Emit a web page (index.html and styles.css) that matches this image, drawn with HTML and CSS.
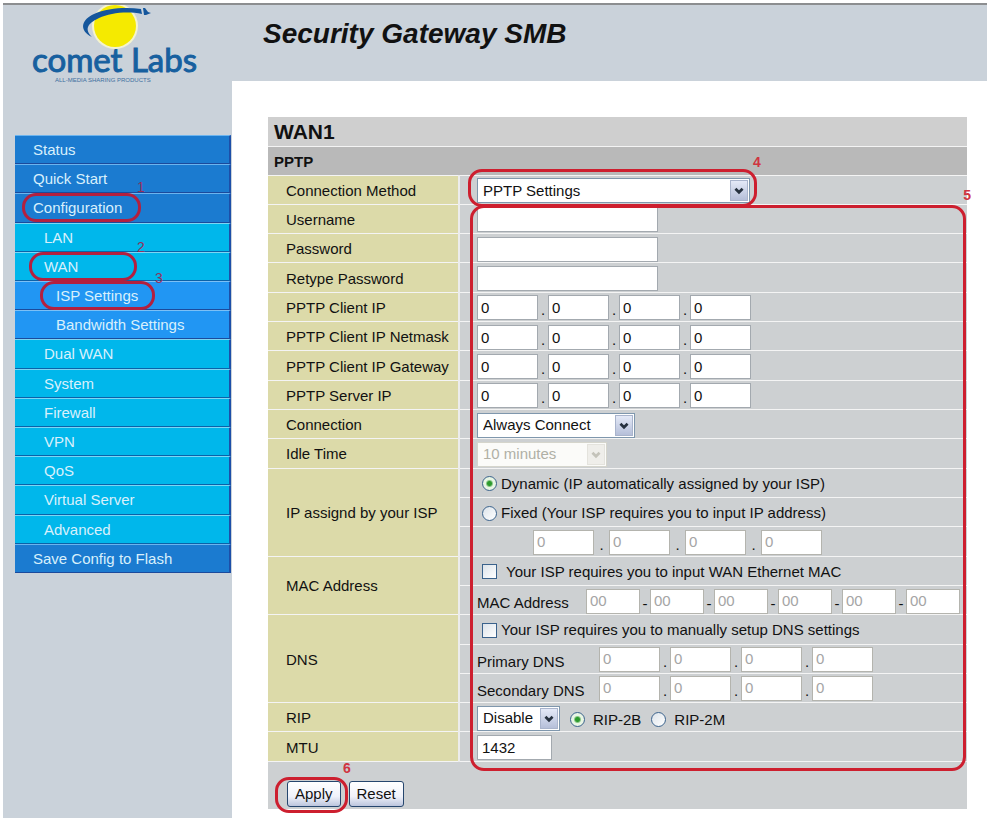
FILE: index.html
```html
<!DOCTYPE html>
<html lang="en">
<head>
<meta charset="utf-8">
<title>Security Gateway SMB</title>
<link rel="stylesheet" href="styles.css">
</head>
<body>
<div class="page">
  <aside class="sidebar">
    <svg class="logo" viewBox="0 0 180 80" role="img" aria-label="comet Labs">
      <circle cx="87" cy="21" r="23" fill="#f4f3cf"/>
      <circle cx="87" cy="21" r="21" fill="#f5ea00"/>
      <path d="M64 32C50 25 54 14 66 9C79 3 98 2 113 4L114 9C99 6 82 8 71 13C58 19 57 25 64 32Z" fill="#14569c"/>
      <path d="M115 3L117 3L120 7L123 8L118 10L116 10Z" fill="#14569c"/>
      <text class="logo-name" x="4" y="67">comet Labs</text>
      <text class="logo-tag" x="27" y="77">ALL-MEDIA SHARING PRODUCTS</text>
    </svg>
    <nav class="menu">
      <a href="#">Status</a>
      <a href="#">Quick Start</a>
      <a href="#">Configuration<span class="mark mark-config"></span><b class="num num-1">1</b></a>
      <a class="sub" href="#">LAN</a>
      <a class="sub" href="#">WAN<span class="mark mark-wan"></span><b class="num num-2">2</b></a>
      <a class="leaf" href="#">ISP Settings<span class="mark mark-isp"></span><b class="num num-3">3</b></a>
      <a class="leaf" href="#">Bandwidth Settings</a>
      <a class="sub" href="#">Dual WAN</a>
      <a class="sub" href="#">System</a>
      <a class="sub" href="#">Firewall</a>
      <a class="sub" href="#">VPN</a>
      <a class="sub" href="#">QoS</a>
      <a class="sub" href="#">Virtual Server</a>
      <a class="sub" href="#">Advanced</a>
      <a href="#">Save Config to Flash</a>
    </nav>
  </aside>
  <header class="header"><h1>Security Gateway SMB</h1></header>
  <main class="main">
    <form class="panel">
      <table class="settings">
        <colgroup><col class="col-label"><col></colgroup>
        <thead>
          <tr><th class="title" colspan="2">WAN1</th></tr>
          <tr><th class="section" colspan="2">PPTP</th></tr>
        </thead>
        <tbody>
          <tr>
            <th><label for="method">Connection Method</label></th>
            <td><span class="select w-method"><select id="method"><option>PPTP Settings</option></select><svg viewBox="0 0 18 20"><path d="M5 8l4 4 4-4"/></svg></span></td>
          </tr>
          <tr><th><label for="user">Username</label></th><td><input id="user" class="text" type="text"></td></tr>
          <tr><th><label for="pass">Password</label></th><td><input id="pass" class="text" type="password"></td></tr>
          <tr><th><label for="pass2">Retype Password</label></th><td><input id="pass2" class="text" type="password"></td></tr>
          <tr>
            <th><label for="cip">PPTP Client IP</label></th>
            <td><div class="ip"><input id="cip" value="0"><i>.</i><input aria-label="Client IP 2" value="0"><i>.</i><input aria-label="Client IP 3" value="0"><i>.</i><input aria-label="Client IP 4" value="0"></div></td>
          </tr>
          <tr>
            <th><label for="cmask">PPTP Client IP Netmask</label></th>
            <td><div class="ip"><input id="cmask" value="0"><i>.</i><input aria-label="Netmask 2" value="0"><i>.</i><input aria-label="Netmask 3" value="0"><i>.</i><input aria-label="Netmask 4" value="0"></div></td>
          </tr>
          <tr>
            <th><label for="cgw">PPTP Client IP Gateway</label></th>
            <td><div class="ip"><input id="cgw" value="0"><i>.</i><input aria-label="Gateway 2" value="0"><i>.</i><input aria-label="Gateway 3" value="0"><i>.</i><input aria-label="Gateway 4" value="0"></div></td>
          </tr>
          <tr>
            <th><label for="sip">PPTP Server IP</label></th>
            <td><div class="ip"><input id="sip" value="0"><i>.</i><input aria-label="Server IP 2" value="0"><i>.</i><input aria-label="Server IP 3" value="0"><i>.</i><input aria-label="Server IP 4" value="0"></div></td>
          </tr>
          <tr>
            <th><label for="conn">Connection</label></th>
            <td><span class="select w-conn"><select id="conn"><option>Always Connect</option></select><svg viewBox="0 0 18 20"><path d="M5 8l4 4 4-4"/></svg></span></td>
          </tr>
          <tr>
            <th><label for="idle">Idle Time</label></th>
            <td><span class="select w-idle"><select id="idle" disabled><option>10 minutes</option></select><svg viewBox="0 0 18 20"><path d="M5 8l4 4 4-4"/></svg></span></td>
          </tr>
          <tr>
            <th rowspan="3">IP assignd by your ISP</th>
            <td><label class="choice"><input type="radio" name="assign" checked>Dynamic (IP automatically assigned by your ISP)</label></td>
          </tr>
          <tr><td><label class="choice"><input type="radio" name="assign">Fixed (Your ISP requires you to input IP address)</label></td></tr>
          <tr><td><div class="ip ip-fixed"><input aria-label="Fixed IP 1" value="0" disabled><i>.</i><input aria-label="Fixed IP 2" value="0" disabled><i>.</i><input aria-label="Fixed IP 3" value="0" disabled><i>.</i><input aria-label="Fixed IP 4" value="0" disabled></div></td></tr>
          <tr>
            <th rowspan="2">MAC Address</th>
            <td><label class="choice choice-wide"><input type="checkbox">Your ISP requires you to input WAN Ethernet MAC</label></td>
          </tr>
          <tr><td><div class="ip mac"><label for="mac">MAC Address</label><input id="mac" value="00" disabled><i>-</i><input aria-label="MAC 2" value="00" disabled><i>-</i><input aria-label="MAC 3" value="00" disabled><i>-</i><input aria-label="MAC 4" value="00" disabled><i>-</i><input aria-label="MAC 5" value="00" disabled><i>-</i><input aria-label="MAC 6" value="00" disabled></div></td></tr>
          <tr>
            <th rowspan="3">DNS</th>
            <td><label class="choice"><input type="checkbox">Your ISP requires you to manually setup DNS settings</label></td>
          </tr>
          <tr><td><div class="ip dns"><label for="dns1">Primary DNS</label><input id="dns1" value="0" disabled><i>.</i><input aria-label="Primary DNS 2" value="0" disabled><i>.</i><input aria-label="Primary DNS 3" value="0" disabled><i>.</i><input aria-label="Primary DNS 4" value="0" disabled></div></td></tr>
          <tr><td><div class="ip dns"><label for="dns2">Secondary DNS</label><input id="dns2" value="0" disabled><i>.</i><input aria-label="Secondary DNS 2" value="0" disabled><i>.</i><input aria-label="Secondary DNS 3" value="0" disabled><i>.</i><input aria-label="Secondary DNS 4" value="0" disabled></div></td></tr>
          <tr>
            <th><label for="rip">RIP</label></th>
            <td><div class="rip"><span class="select w-rip"><select id="rip"><option>Disable</option></select><svg viewBox="0 0 18 20"><path d="M5 8l4 4 4-4"/></svg></span><label><input type="radio" name="ripv" checked>RIP-2B</label><label><input type="radio" name="ripv">RIP-2M</label></div></td>
          </tr>
          <tr><th><label for="mtu">MTU</label></th><td><input id="mtu" class="text mtu" type="text" value="1432"></td></tr>
        </tbody>
      </table>
      <div class="actions">
        <span class="apply"><button type="button">Apply</button><span class="mark mark-apply"></span><b class="num num-6">6</b></span>
        <button type="button">Reset</button>
      </div>
      <span class="mark mark-method"></span><b class="num num-4">4</b>
      <span class="mark mark-fields"></span><b class="num num-5">5</b>
    </form>
  </main>
</div>
</body>
</html>
```
FILE: styles.css
```css
* { box-sizing: border-box; }

body {
  margin: 0;
  padding: 3px 0 0 3px;
  background: #fff;
  color: #111;
  font: 15px/20px "Liberation Sans", Arial, sans-serif;
}

.page {
  display: grid;
  grid-template-columns: 229px 1fr;
  grid-template-rows: 76px 1fr;
  min-height: calc(100vh - 3px);
  background: #cad2da;
  border-top: 2px solid #8c8e90;
}

.sidebar { grid-row: 1 / 3; }

.logo {
  display: block;
  width: 180px;
  height: 80px;
  margin: 0 0 50px 25px;
}
.logo-name { font: 400 33px Lato, sans-serif; fill: #17609f; stroke: #17609f; }
.logo-tag { font: 6px "Liberation Sans", sans-serif; fill: #3d6fa0; }

.menu {
  display: grid;
  grid-auto-rows: 1fr;
  min-height: 438px;
  margin: 0 1px 0 12px;
}
.menu a {
  position: relative;
  display: flex;
  align-items: center;
  padding: 1px 0 0 18px;
  background: #1b7bd0;
  border-top: 1px solid #6cb4ee;
  border-bottom: 1px solid #1b4a9c;
  border-right: 2px solid #1d4fa8;
  color: #d8f0fc;
  text-decoration: none;
}
.menu .sub { padding-left: 29px; background: #00b7eb; border-top-color: #7cd6f4; border-bottom-color: #0b62a8; }
.menu .leaf { padding-left: 41px; background: #2196f3; border-top-color: #7cc0f6; }

.header { padding: 9px 31px; }
.header h1 { margin: 0; font-size: 28px; font-style: italic; line-height: 40px; }

.main { padding: 36px 20px 10px 36px; background: #fff; }
.panel { position: relative; background: #cdd0d2; }

.settings { width: 100%; height: 645px; border-collapse: collapse; table-layout: fixed; }
.col-label { width: 191px; }
.settings th, .settings td { height: 29px; padding: 2px 0 0; border-bottom: 1px solid #f4f4f4; text-align: left; }
.settings tbody th {
  padding-left: 18px;
  background: #dcdaa9;
  border-right: 2px solid #ececec;
  font-weight: 400;
}
.settings td { padding-left: 17px; }
.settings .title { padding-left: 6px; background: #cfcfcf; font-size: 21px; }
.settings .section { padding-left: 6px; background: #b9b9b9; }

input, select, button { margin: 0; font: inherit; color: #111; }
.text, .ip input {
  display: block;
  width: 181px;
  height: 25px;
  padding: 0 3px;
  background: #fff;
  border: 1px solid #a3a9af;
  border-radius: 0;
}
.text.mtu { width: 75px; padding: 0 4px; }
.ip { display: flex; align-items: center; }
.ip > * { flex: none; }
.ip input { width: 61px; }
.ip i { width: 10px; padding-top: 5px; font-style: normal; text-align: center; }
.ip input:disabled { padding-bottom: 2px; color: #a5a5a5; border-color: #b4b4ae; }
.ip-fixed { padding-left: 56px; }
.ip-fixed i { width: 15px; }
.ip label { padding-top: 4px; }
.mac input { width: 54px; }
.mac label { width: 109px; }
.dns label { width: 122px; }

.select { position: relative; display: block; height: 25px; }
.select select {
  width: 100%;
  height: 25px;
  padding: 0 22px 0 5px;
  background: #fff;
  border: 1px solid #7f97ad;
  border-radius: 0;
  appearance: none;
}
.select svg {
  position: absolute;
  top: 2px;
  right: 2px;
  width: 18px;
  height: 21px;
  background: linear-gradient(#e4e9f7, #b5bfd9);
  border: 1px solid #a9b4cc;
  pointer-events: none;
}
.select path { fill: none; stroke: #26313f; stroke-width: 3; }
.select select:disabled { color: #b0b0a6; border-color: #d5d5cc; opacity: 1; background: #fbfbf9; }
.select select:disabled + svg { background: #efeeea; border-color: #e4e3dd; }
.select select:disabled + svg path { stroke: #c4c3ba; }
.w-method { width: 273px; }
.w-conn { width: 158px; }
.w-idle { width: 130px; }
.w-rip { width: 83px; }

input[type="radio"], input[type="checkbox"] {
  flex: none;
  width: 15px;
  height: 15px;
  border: 1px solid #3a628c;
  background: linear-gradient(135deg, #dce3ea, #fff);
  appearance: none;
}
input[type="radio"] { border-radius: 50%; }
input[type="radio"]:checked { background: radial-gradient(circle, #2c9a2c 0 2px, #e8f5e4 4px); }
.choice { display: flex; align-items: center; gap: 4px; padding-left: 5px; }
.choice-wide { gap: 9px; }
.rip { display: flex; align-items: center; gap: 10px; }
.rip label { display: flex; align-items: center; gap: 8px; padding-top: 3px; }

.actions { display: flex; align-items: center; gap: 8px; padding: 19px 19px 2px; }
.apply { position: relative; display: flex; }
button {
  height: 26px;
  padding: 0 7px;
  background: linear-gradient(#fff, #f0f2fa 60%, #bcc5dd);
  border: 1px solid #26466e;
  border-radius: 3px;
}

.mark {
  position: absolute;
  border: 3px solid #cd1f2f;
  border-radius: 14px;
  pointer-events: none;
}
.num { position: absolute; color: #d03440; font-size: 14px; line-height: 16px; font-weight: 400; }
.menu .mark { z-index: 1; top: -1px; height: 29px; border-color: #b3203f; }
.menu .num { z-index: 1; color: #94305c; }
.mark-config { left: 7px; width: 119px; }
.mark-wan { left: 14px; width: 108px; }
.mark-isp { left: 25px; width: 115px; }
.num-1 { left: 122px; top: -15px; }
.num-2 { left: 122px; top: -14px; }
.num-3 { left: 140px; top: -12px; }
.mark-method { left: 200px; top: 52px; width: 289px; height: 38px; }
.num-4 { left: 485px; top: 37px; font-weight: 700; }
.mark-fields { left: 202px; top: 88px; right: 1px; bottom: 38px; }
.num-5 { right: -4px; top: 70px; font-weight: 700; }
.mark-apply { left: -12px; top: -4px; width: 73px; height: 36px; }
.num-6 { left: 56px; top: -21px; font-weight: 700; }
```
